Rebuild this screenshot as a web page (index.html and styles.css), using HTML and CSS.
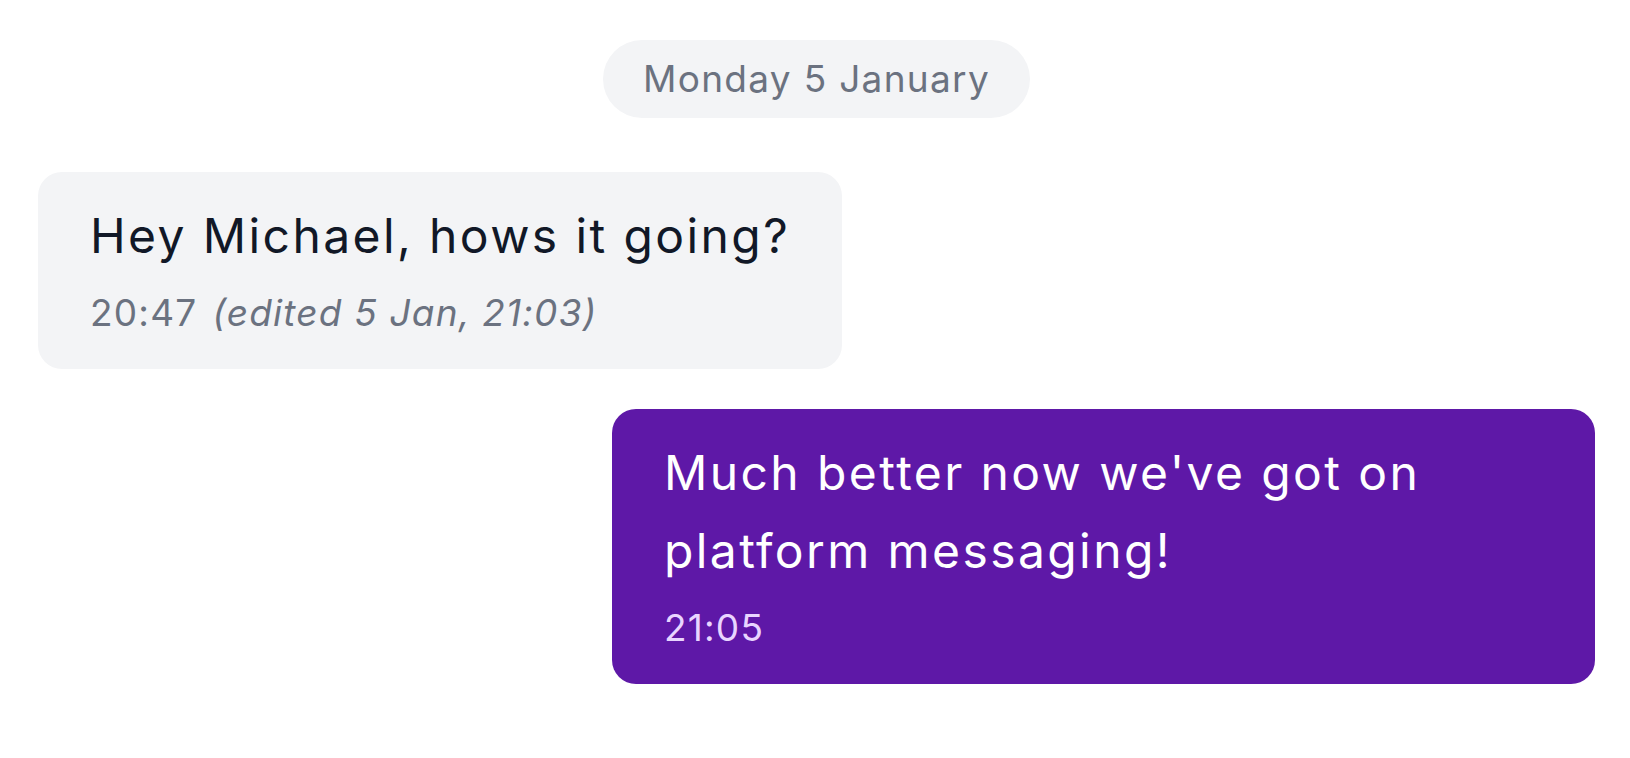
FILE: index.html
```html
<!DOCTYPE html>
<html lang="en">
<head>
<meta charset="utf-8">
<title>Messages</title>
<link rel="stylesheet" href="styles.css">
</head>
<body>
<main class="thread">
  <div class="day">
    <span class="day-pill">Monday 5 January</span>
  </div>
  <div class="row row-in">
    <div class="bubble bubble-in">
      <p class="text">Hey Michael, hows it going?</p>
      <p class="meta"><span class="time">20:47</span><span class="edited">(edited 5 Jan, 21:03)</span></p>
    </div>
  </div>
  <div class="row row-out">
    <div class="bubble bubble-out">
      <p class="text">Much better now we've got on platform messaging!</p>
      <p class="meta"><span class="time">21:05</span></p>
    </div>
  </div>
</main>
</body>
</html>
```

FILE: styles.css
```css
* { box-sizing: border-box; }
html, body { margin: 0; padding: 0; background: #ffffff; }
body {
  font-family: Inter, "Noto Sans", "Liberation Sans", sans-serif;
  width: 1630px;
  height: 758px;
  overflow: hidden;
}
.thread {
  display: flex;
  flex-direction: column;
  padding: 40px 35px 0 38px;
}
.day {
  display: flex;
  justify-content: center;
}
.day-pill {
  background: #f3f4f6;
  color: #6b7280;
  font-size: 37px;
  letter-spacing: 1.3px;
  line-height: 54px;
  padding: 12px 40px;
  border-radius: 40px;
}
.row { display: flex; }
.row-in { justify-content: flex-start; margin-top: 54px; }
.row-out { justify-content: flex-end; margin-top: 40px; }
.bubble {
  border-radius: 24px;
  padding: 25px 52px 29px;
  display: flex;
  flex-direction: column;
  gap: 11px;
}
.bubble-in { background: #f3f4f6; color: #111827; }
.bubble-out { background: #5e18a7; color: #ffffff; width: 983px; }
.text {
  margin: 0;
  font-size: 48px;
  letter-spacing: 2.4px;
  line-height: 78px;
}
.meta {
  margin: 0;
  font-size: 37px;
  letter-spacing: 1.2px;
  line-height: 54px;
  display: flex;
  gap: 15px;
}
.bubble-in .meta { color: #6b7280; }
.bubble-out .meta { color: #e9d5ff; }
.edited { font-style: italic; }
```
